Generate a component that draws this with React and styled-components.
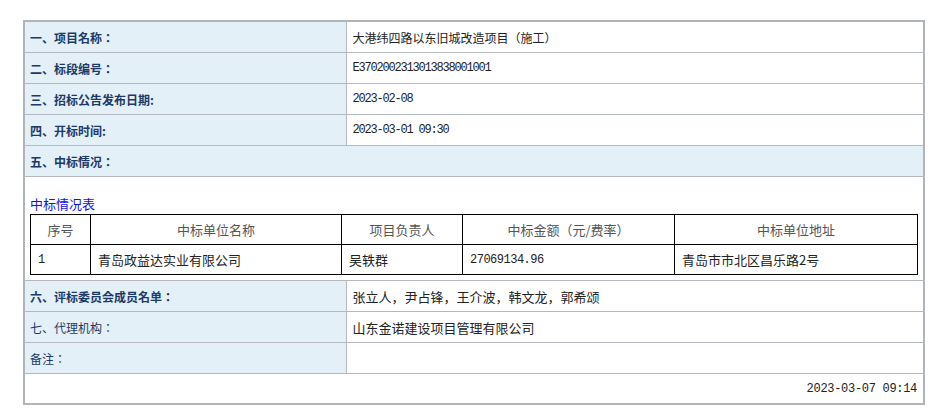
import React from "react";
import styled, { createGlobalStyle } from "styled-components";

const info = [
  { label: "一、项目名称：", value: "大港纬四路以东旧城改造项目（施工）", bold: true, kind: "song" },
  { label: "二、标段编号：", value: "E3702002313013838001001", bold: true, kind: "mono" },
  { label: "三、招标公告发布日期:", value: "2023-02-08", bold: true, kind: "mono" },
  { label: "四、开标时间:", value: "2023-03-01 09:30", bold: true, kind: "mono" },
];

const tail = [
  { label: "六、评标委员会成员名单：", value: "张立人，尹占锋，王介波，韩文龙，郭希颂", bold: true, kind: "sans" },
  { label: "七、代理机构：", value: "山东金诺建设项目管理有限公司", bold: false, kind: "sans" },
  { label: "备注：", value: "", bold: false, kind: "sans" },
];

const resultHead = ["序号", "中标单位名称", "项目负责人", "中标金额（元/费率）", "中标单位地址"];
const resultCols = [60, 251, 121, 212, 243];
const resultBody = [
  [
    { text: "1", mono: true },
    { text: "青岛政益达实业有限公司" },
    { text: "吴轶群" },
    { text: "27069134.96", mono: true },
    { text: "青岛市市北区昌乐路2号" },
  ],
];

export default function App() {
  return (
    <Page>
      <GlobalStyle />
      <InfoTable>
        <colgroup>
          <col style={{ width: 322 }} />
          <col />
        </colgroup>
        <tbody>
          {info.map((row) => (
            <tr key={row.label}>
              <LabelCell $bold={row.bold}>{row.label}</LabelCell>
              <ValueCell $kind={row.kind}>{row.value}</ValueCell>
            </tr>
          ))}
          <tr>
            <LabelCell $bold colSpan={2}>五、中标情况：</LabelCell>
          </tr>
          <tr>
            <SectionCell colSpan={2}>
              <Caption>中标情况表</Caption>
              <ResultTable>
                <colgroup>
                  {resultCols.map((w, i) => (
                    <col key={i} style={{ width: w }} />
                  ))}
                </colgroup>
                <thead>
                  <tr>
                    {resultHead.map((h) => (
                      <Th key={h}>{h}</Th>
                    ))}
                  </tr>
                </thead>
                <tbody>
                  {resultBody.map((r, i) => (
                    <tr key={i}>
                      {r.map((c, j) => (
                        <Td key={j} $mono={c.mono}>
                          {c.text}
                        </Td>
                      ))}
                    </tr>
                  ))}
                </tbody>
              </ResultTable>
            </SectionCell>
          </tr>
          {tail.map((row) => (
            <tr key={row.label}>
              <LabelCell $bold={row.bold}>{row.label}</LabelCell>
              <ValueCell $kind={row.kind}>{row.value}</ValueCell>
            </tr>
          ))}
          <tr>
            <FooterCell colSpan={2}>2023-03-07 09:14</FooterCell>
          </tr>
        </tbody>
      </InfoTable>
    </Page>
  );
}

const GlobalStyle = createGlobalStyle`
  body {
    margin: 0;
    background: #fff;
    font-family: "Noto Sans CJK SC", "Noto Sans", sans-serif;
    text-spacing-trim: space-all;
  }
`;

const Page = styled.main`
  padding: 20px 19px 0 23px;
`;

const InfoTable = styled.table`
  width: 902px;
  border-collapse: collapse;
  table-layout: fixed;
  border: 2px solid #b0b5ba;
`;

const LabelCell = styled.td`
  height: 30px;
  padding: 0 5px;
  border: 1px solid #b4b9bf;
  background: #e3f0f8;
  color: #1d3a66;
  font-family: "Noto Sans CJK JP", "Noto Sans CJK SC", sans-serif;
  font-size: 12px;
  font-weight: ${(p) => (p.$bold ? 700 : 400)};
  vertical-align: middle;
  white-space: nowrap;
`;

const mono = (spacing) => `
  font-family: "Liberation Mono", monospace;
  font-size: 12px;
  letter-spacing: ${spacing}px;
`;

const ValueCell = styled.td`
  height: 30px;
  padding: 0 4px 0 6px;
  border: 1px solid #b4b9bf;
  color: #222;
  vertical-align: middle;
  white-space: nowrap;
  font-size: ${(p) => (p.$kind === "sans" ? "13px" : "12px")};
  ${(p) => (p.$kind === "mono" ? mono(-1.2) : "")}
`;

const SectionCell = styled.td`
  padding: 18px 5px 5px;
  border: 1px solid #b4b9bf;
`;

const Caption = styled.div`
  color: #1010f0;
  font-size: 13px;
  line-height: 18px;
  margin-bottom: 1px;
`;

const ResultTable = styled.table`
  width: 888px;
  border-collapse: collapse;
  table-layout: fixed;
`;

const Th = styled.th`
  height: 29px;
  padding: 0;
  border: 1px solid #000;
  color: #555;
  font-size: 13px;
  font-weight: 400;
  text-align: center;
  vertical-align: middle;
`;

const Td = styled.td`
  height: 29px;
  padding: 0 6px 0 7px;
  border: 1px solid #000;
  color: #222;
  font-size: 13px;
  vertical-align: middle;
  white-space: nowrap;
  ${(p) => (p.$mono ? mono(-0.5) : "")}
`;

const FooterCell = styled.td`
  height: 29px;
  padding: 0 6px;
  border: 1px solid #b4b9bf;
  text-align: right;
  color: #222;
  vertical-align: middle;
  ${mono(-0.3)}
`;
